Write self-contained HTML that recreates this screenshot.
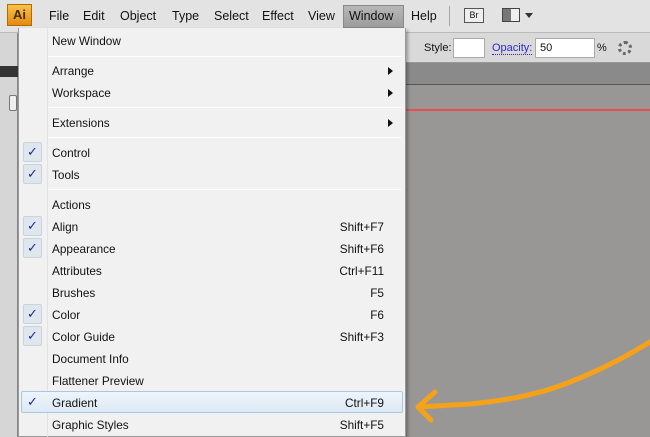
<!DOCTYPE html>
<html><head><style>
*{margin:0;padding:0;box-sizing:border-box}
body{width:650px;height:437px;overflow:hidden;position:relative;background:#999795;font-family:"Liberation Sans",Tahoma,sans-serif;font-size:12px;color:#111}
.abs{position:absolute}
#mb{left:0;top:0;width:650px;height:33px;background:#e3e3e3;border-bottom:1px solid #bbb}
.mi{position:absolute;top:9px;font-size:12.5px}
#tb{left:0;top:33px;width:650px;height:30px;background:#d9d9d9;border-bottom:1px solid #999}
#strip{left:0;top:63px;width:650px;height:22px;background:#8a8a8a;border-bottom:1px solid #555}
#lp{left:0;top:33px;width:18px;height:404px;background:#d6d6d6;border-right:1px solid #888}
#menu{left:18px;top:28px;width:388px;height:409px;background:#f1f1f1;border:1px solid #999;border-top:none;box-shadow:2px 2px 3px rgba(0,0,0,.3)}
.it{position:absolute;left:33px;font-size:11.8px;margin-top:1px}
.sc{position:absolute;right:21px;font-size:11.8px;margin-top:1px}
.sep{position:absolute;left:29px;right:4px;height:1px;background:#d8d8d8;border-bottom:1px solid #fff}
.ck{position:absolute;left:4px;width:19px;height:20px;background:#dfe6ee;border:1px solid #c9d3de;border-radius:2px;color:#1a2a9a;font-size:13px;text-align:center;line-height:18px}
.ar{position:absolute;right:12px;width:0;height:0;border-top:4px solid transparent;border-bottom:4px solid transparent;border-left:5px solid #111}
</style></head><body>
<div id="mb" class="abs">
 <div class="abs" style="left:7px;top:4px;width:25px;height:22px;background:linear-gradient(#f9c24a,#e48a10);border:1px solid #b36a00;color:#4a2a00;font-weight:bold;font-size:13px;text-align:center;line-height:20px">Ai</div>
 <span class="mi" style="left:49px">File</span>
 <span class="mi" style="left:83px">Edit</span>
 <span class="mi" style="left:120px">Object</span>
 <span class="mi" style="left:172px">Type</span>
 <span class="mi" style="left:214px">Select</span>
 <span class="mi" style="left:262px">Effect</span>
 <span class="mi" style="left:308px">View</span>
 <div class="abs" style="left:343px;top:5px;width:61px;height:23px;background:linear-gradient(#b8b8b8,#9c9c9c);border:1px solid #888"></div>
 <span class="mi" style="left:349px">Window</span>
 <span class="mi" style="left:411px">Help</span>
 <div class="abs" style="left:449px;top:6px;width:1px;height:20px;background:#aaa"></div>
 <div class="abs" style="left:464px;top:8px;width:20px;height:15px;border:1px solid #555;font-size:9px;line-height:13px;text-align:center;background:#eee">Br</div>
 <div class="abs" style="left:502px;top:8px;width:18px;height:14px;border:1px solid #444;background:linear-gradient(90deg,#777 50%,#eee 50%)"></div>
 <div class="abs" style="left:525px;top:13px;border-left:4px solid transparent;border-right:4px solid transparent;border-top:5px solid #333"></div>
</div>
<div id="tb" class="abs">
 <span class="abs" style="left:424px;top:9px;font-size:11px">Style:</span>
 <div class="abs" style="left:453px;top:5px;width:32px;height:20px;background:#fff;border:1px solid #aaa"></div>
 <span class="abs" style="left:492px;top:9px;font-size:11px;color:#2a2ad0;border-bottom:1px dotted #2a2ad0">Opacity:</span>
 <div class="abs" style="left:535px;top:5px;width:60px;height:20px;background:#fff;border:1px solid #aaa;font-size:11px;padding:3px 4px">50</div>
 <span class="abs" style="left:597px;top:9px;font-size:11px">%</span>
 <div class="abs" style="left:618px;top:8px;width:14px;height:14px;border-radius:50%;border:3px dotted #666"></div>
</div>
<div id="strip" class="abs"></div>
<div class="abs" style="left:406px;top:109px;width:244px;height:2px;background:#e85050"></div>
<div id="lp" class="abs">
 <div class="abs" style="left:0;top:33px;width:18px;height:11px;background:#333"></div>
 <div class="abs" style="left:9px;top:62px;width:8px;height:16px;border:1px solid #777;border-radius:2px;background:#eee"></div>
</div>
<svg class="abs" style="left:0;top:0" width="650" height="437">
<path d="M650 342 C620 360 600 370 570 382 C540 394 510 400 470 404 L418 407 M418 407 L435 392 M418 407 L431 420" fill="none" stroke="#f5a21a" stroke-width="5" stroke-linecap="round" stroke-linejoin="round"/>
</svg>
<div id="menu" class="abs">
 <div class="abs" style="left:28px;top:0;width:1px;height:409px;background:#e2e2e2"></div>
 <span class="it" style="top:5px">New Window</span>
 <div class="sep" style="top:28px"></div>
 <span class="it" style="top:35px">Arrange</span><div class="ar" style="top:39px"></div>
 <span class="it" style="top:57px">Workspace</span><div class="ar" style="top:61px"></div>
 <div class="sep" style="top:79px"></div>
 <span class="it" style="top:87px">Extensions</span><div class="ar" style="top:91px"></div>
 <div class="sep" style="top:109px"></div>
 <div class="ck" style="top:114px">✓</div><span class="it" style="top:117px">Control</span>
 <div class="ck" style="top:136px">✓</div><span class="it" style="top:139px">Tools</span>
 <div class="sep" style="top:161px"></div>
 <span class="it" style="top:169px">Actions</span>
 <div class="ck" style="top:188px">✓</div><span class="it" style="top:191px">Align</span><span class="sc" style="top:191px">Shift+F7</span>
 <div class="ck" style="top:210px">✓</div><span class="it" style="top:213px">Appearance</span><span class="sc" style="top:213px">Shift+F6</span>
 <span class="it" style="top:235px">Attributes</span><span class="sc" style="top:235px">Ctrl+F11</span>
 <span class="it" style="top:257px">Brushes</span><span class="sc" style="top:257px">F5</span>
 <div class="ck" style="top:276px">✓</div><span class="it" style="top:279px">Color</span><span class="sc" style="top:279px">F6</span>
 <div class="ck" style="top:298px">✓</div><span class="it" style="top:301px">Color Guide</span><span class="sc" style="top:301px">Shift+F3</span>
 <span class="it" style="top:323px">Document Info</span>
 <span class="it" style="top:345px">Flattener Preview</span>
 <div class="abs" style="left:2px;top:363px;width:382px;height:22px;background:linear-gradient(#eef4fa,#dde9f4);border:1px solid #a8c8e2;border-radius:2px"></div>
 <span class="abs" style="left:8px;top:366px;color:#1a2a9a;font-size:13px">✓</span>
 <span class="it" style="top:367px">Gradient</span><span class="sc" style="top:367px">Ctrl+F9</span>
 <span class="it" style="top:389px">Graphic Styles</span><span class="sc" style="top:389px">Shift+F5</span>
</div>
</body></html>
